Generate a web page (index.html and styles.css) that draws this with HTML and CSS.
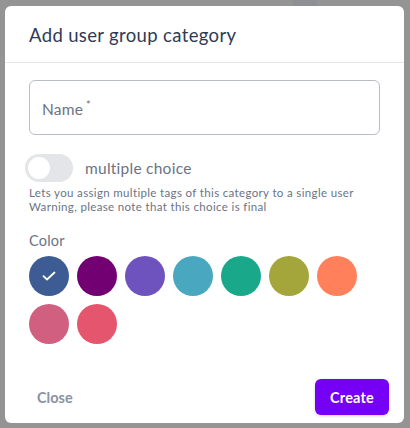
FILE: index.html
```html
<!DOCTYPE html>
<html lang="en">
<head>
<meta charset="utf-8">
<title>Add user group category</title>
<link rel="stylesheet" href="styles.css">
</head>
<body>
<div class="backdrop-patch"></div>
<div class="modal">
  <div class="modal-header">
    <h2 class="modal-title">Add user group category</h2>
  </div>
  <div class="modal-body">
    <label class="field">
      <span class="field-label">Name<sup class="req">*</sup></span>
    </label>
    <div class="switch-row">
      <span class="switch"><span class="knob"></span></span>
      <span class="switch-label">multiple choice</span>
    </div>
    <div class="helper">
      <p class="helper-line">Lets you assign multiple tags of this category to a single user</p>
      <p class="helper-line">Warning, please note that this choice is final</p>
    </div>
    <div class="color-label">Color</div>
    <div class="swatches">
      <span class="swatch selected" style="background:#3e5c94">
        <svg width="14" height="10" viewBox="0 0 14 10"><path d="M1.5 5.2 L5 8.5 L12.5 1.5" fill="none" stroke="#fff" stroke-width="1.8" stroke-linecap="round" stroke-linejoin="round"/></svg>
      </span>
      <span class="swatch" style="background:#730073"></span>
      <span class="swatch" style="background:#6e53bf"></span>
      <span class="swatch" style="background:#4aa7c0"></span>
      <span class="swatch" style="background:#19a98a"></span>
      <span class="swatch" style="background:#a4a53a"></span>
      <span class="swatch" style="background:#ff805b"></span>
      <span class="swatch" style="background:#d05f80"></span>
      <span class="swatch" style="background:#e5566e"></span>
    </div>
  </div>
  <div class="modal-footer">
    <button class="btn-text">Close</button>
    <button class="btn-primary">Create</button>
  </div>
</div>
</body>
</html>
```
FILE: styles.css
```css
html, body {
  margin: 0;
  padding: 0;
}
body {
  background: #949494;
  width: 410px;
  height: 428px;
  overflow: hidden;
  position: relative;
  font-family: "Lato", "Noto Sans", sans-serif;
}
.backdrop-patch {
  position: absolute;
  left: 293px;
  top: 0;
  width: 24px;
  height: 8px;
  background: #8d8f92;
}
.modal {
  position: relative;
  margin: 6px 6px 0 5px;
  width: 399px;
  height: 417px;
  background: #fff;
  border-radius: 6px;
  display: flex;
  flex-direction: column;
  box-sizing: border-box;
}
.modal-header {
  height: 57px;
  border-bottom: 1px solid #e6e7ea;
  display: flex;
  align-items: center;
  padding: 0 24px;
  box-sizing: border-box;
}
.modal-title {
  margin: 0;
  font-size: 18.5px;
  font-weight: 400;
  color: #2f3a56;
  letter-spacing: 0.35px;
  padding-top: 2px;
}
.modal-body {
  padding: 17px 24px 0 24px;
  flex: 1;
}
.field {
  display: flex;
  align-items: center;
  height: 55px;
  box-sizing: border-box;
  border: 1px solid #b9bdc5;
  border-radius: 6px;
  padding: 0 12px;
  width: 351px;
}
.field-label {
  font-size: 15.5px;
  color: #6b7385;
  letter-spacing: 0.2px;
  padding-top: 2px;
}
.req {
  font-size: 11px;
  margin-left: 3px;
  vertical-align: 6px;
  line-height: 0;
}
.switch-row {
  display: flex;
  align-items: center;
  margin-top: 19px;
  margin-left: -4px;
  height: 28px;
}
.switch {
  width: 48px;
  height: 28px;
  border-radius: 14px;
  background: #e4e5e8;
  box-sizing: border-box;
  padding: 3px;
  display: flex;
  align-items: center;
}
.knob {
  width: 22px;
  height: 22px;
  border-radius: 50%;
  background: #fff;
}
.switch-label {
  margin-left: 12px;
  font-size: 15.5px;
  color: #6b7385;
  letter-spacing: 0.25px;
}
.helper {
  margin-top: 4px;
  display: flex;
  flex-direction: column;
}
.helper-line {
  margin: 0;
  font-size: 11.5px;
  line-height: 14px;
  letter-spacing: 0.35px;
  color: #6b7385;
  white-space: nowrap;
}
.color-label {
  margin-top: 18px;
  font-size: 14.5px;
  color: #6b7385;
  line-height: 18px;
  letter-spacing: 0.2px;
}
.swatches {
  margin-top: 6px;
  display: flex;
  flex-wrap: wrap;
  gap: 8px;
  width: 340px;
}
.swatch {
  width: 40px;
  height: 40px;
  border-radius: 50%;
  display: flex;
  align-items: center;
  justify-content: center;
}
.modal-footer {
  display: flex;
  justify-content: space-between;
  align-items: center;
  padding: 0 15px 8px 24px;
}
.btn-text {
  border: none;
  background: none;
  font-family: inherit;
  font-size: 14.5px;
  font-weight: 700;
  color: #8a92a3;
  padding: 8px;
  cursor: pointer;
}
.btn-primary {
  border: none;
  background: #7600f5;
  color: #fff;
  font-family: inherit;
  font-size: 14.5px;
  font-weight: 700;
  letter-spacing: 0.2px;
  width: 74px;
  height: 36px;
  border-radius: 6px;
  box-shadow: 0 1px 3px rgba(0,0,0,0.2);
  cursor: pointer;
}
```
